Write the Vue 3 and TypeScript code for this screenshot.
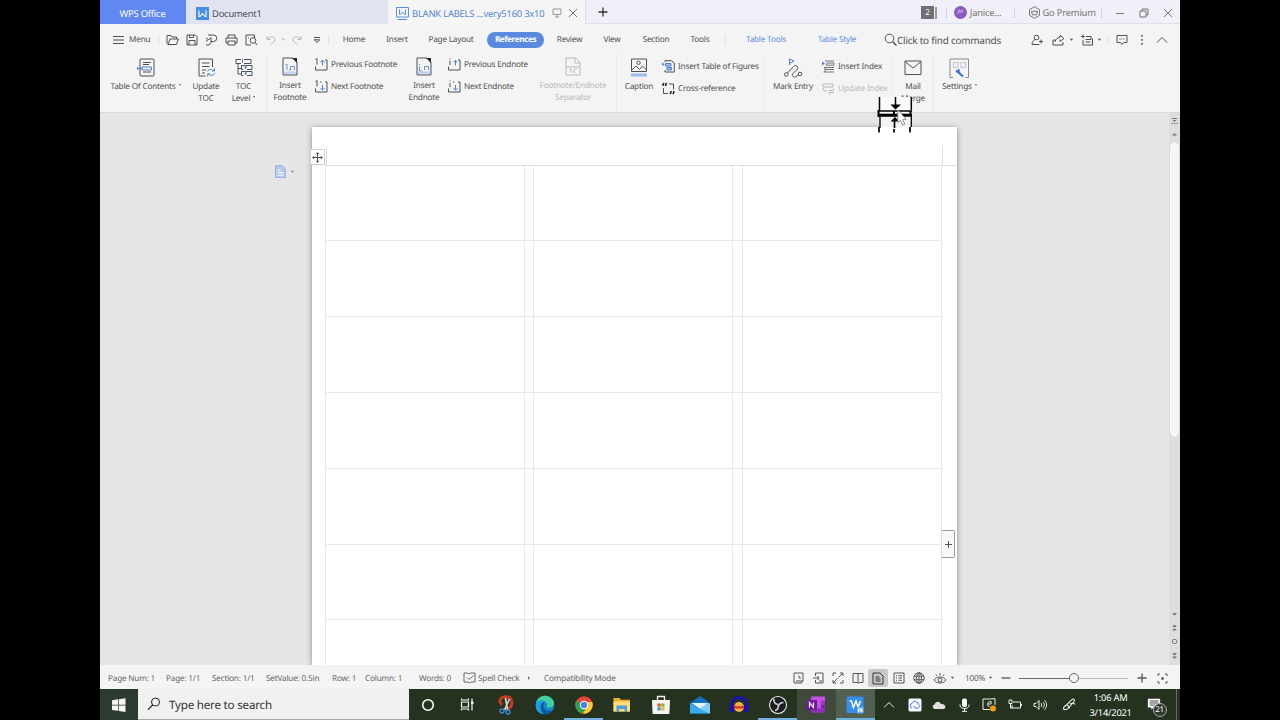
<script setup lang="ts">
import { ref } from 'vue';

interface Icon { w: number; h: number; body: string }
interface Cell { icon?: string; text?: string; w: number; ml?: number; cls?: string }

// line icons, stroke colour comes from currentColor
const icons: Record<string, Icon> = {
  burger: { w: 12, h: 10, body: '<path d="M0 1.500h11M0 5h11M0 8.500h11"/>' },
  open: { w: 13, h: 12, body: '<path d="M2 10.500L1 9.500V1.500h4l1 1.500h4.500v2M2 10.500L4 5h8.500L10.500 10.500z"/>' },
  save: { w: 12, h: 12, body: '<path d="M1 1h8.500l1.500 1.500V11H1zM3 11V6.500h6V11M3.500 1v2.500h4V1"/>' },
  export: { w: 13, h: 12, body: '<path d="M3 1h5.500a3 3 0 0 1 0 6.500H6M6 3.500v5L4 11H1M1 4l2.500 1.500L6 4M1 7.500l2.500-2"/>' },
  print: { w: 13, h: 12, body: '<path d="M3 4V1h7v3M3 9H1V4h11v5h-2M3 7h7v4H3z"/>' },
  preview: { w: 13, h: 12, body: '<path d="M6 11H1V1h8.500v3"/><circle cx="8" cy="6.500" r="2.800"/><path d="M10 8.500l2 2.500M3 4h1"/>' },
  undo: { w: 11, h: 10, body: '<path d="M1 1v3.500h3.500M1 4.500C3 1 9 1 9 4.500 9 7 6.500 8 5 9"/>' },
  redo: { w: 11, h: 10, body: '<path d="M10 1v3.500H6.500M10 4.500C8 1 2 1 2 4.500 2 7 4.500 8 6 9"/>' },
  dropdown: { w: 8, h: 8, body: '<path d="M1 1.500h6M1.200 3.800h5.600L4 6.500z"/>' },
  caret: { w: 5, h: 4, body: '<path d="M0.800 0.800h3.400L2.500 2.800z" fill="currentColor" stroke="none"/>' },
  search: { w: 13, h: 13, body: '<circle cx="5.500" cy="5.500" r="4.300"/><path d="M8.700 8.700L12.500 12.500" stroke-width="1.500"/>' },
  person: { w: 13, h: 12, body: '<circle cx="5.500" cy="3.500" r="2.300"/><path d="M4 5.500C2 6.500 1 8 1 10.500h7.500M10 5.500v4M8 7.500h4"/>' },
  share: { w: 13, h: 12, body: '<path d="M3 6H1v5h10V8M3 8C3.500 5 5.500 3.500 8 3.500V1.200L12 4.500 8 7.500V5.500"/>' },
  collab: { w: 13, h: 12, body: '<path d="M0 2.500h4M2 0.500v4M5 2.500h5v3H5M2 6v5h9.500V4.500M4.500 5.500h5M4.500 8h5"/>' },
  comment: { w: 12, h: 12, body: '<path d="M1 1.500h10v7H7.500L6 10.500 4.500 8.500H1z"/><path d="M3.500 5h5" stroke-dasharray="1 1"/>' },
  dots: { w: 4, h: 12, body: '<path d="M2 1v1.700M2 5v1.700M2 9v1.700" stroke-width="1.500"/>' },
  chevron: { w: 12, h: 8, body: '<path d="M1 6.500L6 1.500l5 5"/>' },
  monitor: { w: 10, h: 10, body: '<path d="M1 1h8v5.500H1zM5 6.500V9M3 9h4"/>' },
  close: { w: 10, h: 10, body: '<path d="M1 1l8 8M9 1L1 9"/>' },
  plus: { w: 10, h: 10, body: '<path d="M5 0.500v9M0.500 5h9" stroke-width="1.300"/>' },
  minus: { w: 10, h: 10, body: '<path d="M1 5.500h8"/>' },
  restore: { w: 10, h: 10, body: '<path d="M1 3h6v6H1zM3 3V1h6v6H7"/>' },
  premium: { w: 13, h: 13, body: '<path d="M6.500 0.700l5 2.900v5.800l-5 2.900-5-2.900V3.600z"/><path d="M4.300 8.800l-.8-3.700L5.300 6l1.200-1.700L7.700 6l1.800-.9-.8 3.700z"/>' },
  // ribbon
  toc: { w: 18, h: 20, body: '<rect x="3" y="1" width="14" height="17" rx="1"/><path d="M6 4.500h8M6 6.500h6M6 14h8"/><path d="M0 9l2.500 1.500L0 12z" fill="#3f78d0" stroke="none"/><path d="M1.500 10.500H5M5 9h9.500v3H5z" stroke="#4d80cf"/>' },
  updateToc: { w: 19, h: 20, body: '<path d="M8.500 18H2V1h13.500v8"/><path d="M5 5h7.500M5 8.500h7.500M5 12h4M5 15h3"/><path d="M10.500 13.500c1-2.500 5-2.800 6.500-.5M17.500 10.500V13H15M18 15c-1 2.800-5 3-6.700.8M10.700 18.500v-2.700H13" stroke="#4d80cf"/>' },
  tocLevel: { w: 18, h: 20, body: '<path d="M6 1.500H1v4h5M9 1.500h7v4H9M3 5.500V16h4M3 10.500h4M12 7.500H6.500v4H8M12 7.500h5v4h-5M12 13.500H6.500v4H8M12 13.500h5v4h-5"/><path d="M7.500 1v4M9.500 8h2L10 9.500h1.500l-2 1.500M9.500 14h2L10 15.500h1.500l-2 1.500" stroke="#4d80cf"/>' },
  footnote: { w: 16, h: 19, body: '<path d="M1 1h10l4 4v13H1z"/><path d="M10 1l5 5V1z" fill="#222" stroke="none"/><path d="M3.500 7.500H5V13M7 13H8.500V9.500h4V13" stroke="#6b92d8"/><path d="M2 14.500h12v2.500H2z" fill="#c3d3f2" stroke="none"/>' },
  endnote: { w: 16, h: 19, body: '<path d="M1 1h10l4 4v13H1z"/><path d="M10 1l5 5V1z" fill="#222" stroke="none"/><path d="M3.500 7v1M3.500 9.500V14h3M8.500 13V9.500h4V13" stroke="#6b92d8"/><path d="M2 14.500h12v2.500H2z" fill="#c3d3f2" stroke="none"/>' },
  noteSep: { w: 16, h: 19, body: '<path d="M1 1h10l4 4v13H1zM10 1v5h5M1 10h14M5 12h1v3.500M9 12v3.500h1M12 12h-2"/>' },
  prevFoot: { w: 13, h: 13, body: '<path d="M2 0.500v6M0.500 1.500l1.500-1M0.500 8.500V12h11.500V2H10" /><path d="M7.500 7.500V2.500M5.500 4.300l2-2 2 2" stroke="#4d80cf"/>' },
  nextFoot: { w: 13, h: 13, body: '<path d="M2 0.500v6M0.500 1.500l1.500-1M0.500 8.500V12h11.500V2H10M5 2h1.500" /><path d="M7.500 5v5M5.500 8.200l2 2 2-2" stroke="#4d80cf"/>' },
  prevEnd: { w: 13, h: 13, body: '<path d="M2 0.500v1M2 3v4M0.500 8.500V12h11.500V2H10" /><path d="M7.500 7.500V2.500M5.500 4.300l2-2 2 2" stroke="#4d80cf"/>' },
  nextEnd: { w: 13, h: 13, body: '<path d="M2 0.500v1M2 3v4M0.500 8.500V12h11.500V2H10M5 2h1.500" /><path d="M7.500 5v5M5.500 8.200l2 2 2-2" stroke="#4d80cf"/>' },
  caption: { w: 18, h: 20, body: '<path d="M1.500 1h15v12.500h-15zM2 12l4-4 3.500 3.500L12.500 8l4 4"/><circle cx="8.500" cy="4.800" r="1.700"/><path d="M1.500 16h15v2h-15z" fill="#b8cdf2" stroke="#8caee6"/>' },
  figures: { w: 13, h: 13, body: '<path d="M3 2V0.700h6.500L12.300 3v9H3v-2"/><path d="M0 2.500v3.500l2.500-1.700z" fill="#4d80cf" stroke="none"/><path d="M3.500 3.500H9v2.500H3.500zM5 7.500h4.500V10H5z" stroke="#4d80cf" fill="#a9c2ee"/>' },
  crossRef: { w: 13, h: 13, body: '<path d="M1 4V2.500L2 1M3.700 4V2.500l1-1.500" stroke="#222" stroke-width="1.500"/><path d="M7 2h4.500v5.500M1.500 6v5.500H6"/><path d="M9 9v1.500L8 12M11.800 9v1.500l-1 1.500" stroke="#222" stroke-width="1.500"/>' },
  markEntry: { w: 20, h: 20, body: '<path d="M6.500 7V1l4.500 2.200-4.500 2.300" stroke="#4d80cf"/><circle cx="3.300" cy="16.500" r="1.800"/><circle cx="17" cy="16" r="1.800"/><path d="M4.500 15L10.500 8.500c2-2.300 5.500.2 4 2.500L9.500 16c-1 2.300 1.500 4 3.500 2.500l2.500-1.500"/>' },
  insIndex: { w: 13, h: 13, body: '<path d="M0 1.500v4L3 3.500z" fill="#4d80cf" stroke="none"/><path d="M3 1h9M5 3h7v2.200H4zM2 7.500h10M3 9.500h9M1.500 12H12M3 7.500V12" stroke="#777"/>' },
  updIndex: { w: 13, h: 13, body: '<path d="M1 2h10v3H3a2 2 0 0 0 0 4h2M1 2v3M7 8.500h4.500M11.500 6.500v2M12 10.500H7.500M7.500 12.500v-2"/>' },
  mail: { w: 18, h: 16, body: '<path d="M1 1h16v13.500H1zM1 1.500l8 6.500 8-6.500"/>' },
  settings: { w: 21, h: 21, body: '<path d="M4 19.500H1V1h18.500v18.500h-3" stroke="#888"/><path d="M4.500 4.500H9v5H4.500zM12 4.500h4.500v5H12z" stroke="#b8c4dc"/><path d="M8 13l6 5.500" stroke="#3f78d0" stroke-width="2.200"/><path d="M6.500 12.500c0 2.500 3 3 4 1.500s0-3-1.500-3.500L8.800 12z" fill="#3f78d0" stroke="none"/>' },
  // status bar
  spell: { w: 13, h: 12, body: '<path d="M6 2L4.500 1H1v9h4l1.500 1L8 10h4V1H8zM4 5.500l2 2 4.500-4"/>' },
  history: { w: 11, h: 12, body: '<path d="M3 1h7v8H3M3 1H1v10h8V9M6 3.500V6h2"/>' },
  import: { w: 11, h: 12, body: '<path d="M2.500 4V1H10v10H2.500V8M0 6h6M4.500 4L6 6 4.500 8M6 9h3"/>' },
  expand: { w: 12, h: 12, body: '<path d="M1 4V1h3M8 1h3v3M11 8v3H8M4 11H1V8M6.500 5.500L11 1M5.500 6.500L1 11"/>' },
  book: { w: 12, h: 12, body: '<path d="M6 1.500H1v9h4l1 .8 1-.8h4v-9zM6 1.500V11"/>' },
  page: { w: 12, h: 13, body: '<path d="M1 1h7l3 3v8H1zM3.500 5h4M3.500 7h5M3.500 9h5" stroke="#333"/>' },
  outline: { w: 12, h: 12, body: '<path d="M1 1h10v10H1zM3 3.700h1M5.500 3.700H9M3 6h1M5.500 6H9M3 8.300h1M5.500 8.300H9"/>' },
  globe: { w: 12, h: 12, body: '<circle cx="6" cy="6" r="5.200"/><ellipse cx="6" cy="6" rx="2.400" ry="5.200"/><path d="M1 4.200h10M1 7.800h10M6 1v10"/>' },
  eye: { w: 14, h: 13, body: '<path d="M1 8c2.500-4 9.500-4 12 0-2.500 4-9.500 4-12 0z"/><circle cx="7" cy="8" r="2"/><path d="M7 1v2.500M3 2.500L4 4M11 2.500L10 4"/>' },
  focus: { w: 11, h: 11, body: '<path d="M1 3V1h2M8 1h2v2M10 8v2H8M3 10H1V8"/><circle cx="5.500" cy="5.500" r="1" fill="currentColor"/>' },
  // taskbar
  windows: { w: 14, h: 14, body: '<path d="M0 2.200l6-.9v5.400H0zM6.700 1.200L13.500 0.200v6.500H6.700zM0 7.400h6v5.400l-6-.9zM6.700 7.400h6.800v6.500l-6.800-1z" fill="#f5f5f5" stroke="none"/>' },
  find: { w: 14, h: 14, body: '<circle cx="8.500" cy="5" r="4" stroke="#222"/><path d="M5.700 8L1 12.700" stroke="#222" stroke-width="1.200"/>' },
  cortana: { w: 14, h: 14, body: '<circle cx="7" cy="7" r="5.300" stroke="#fff" stroke-width="1.600"/>' },
  taskView: { w: 14, h: 13, body: '<path d="M1.500 4h7v5h-7zM1.500 0.500V2h7V0.500M1.500 12.500V11h7v1.500M12 0.500v12" stroke="#f4f4f4" stroke-width="1.200"/><path d="M11 3.500h2.500v2.500H11z" fill="#f4f4f4" stroke="none"/>' },
  snip: { w: 18, h: 20, body: '<path d="M5 10C0 5 5 1.500 9 1.800c7.500.5 7.500 10 1.500 12" stroke="#c6381f" stroke-width="3"/><path d="M8.500 3l2 12M12.500 4l-5 11" stroke="#ccd0d5" stroke-width="1.800"/><circle cx="5" cy="16" r="2" stroke="#3c8fd0" stroke-width="1.300"/><circle cx="11" cy="17" r="2" stroke="#3c8fd0" stroke-width="1.300"/>' },
  edge: { w: 20, h: 20, body: '<circle cx="10" cy="10" r="9.300" fill="#1687c9" stroke="none"/><path d="M1 8C3-.5 14-1.500 18 5c3 5-1 8-5 7.500-2-.3-1-1.500-1-3C12 5 4 4 1 8z" fill="#43cfa0" stroke="none"/><path d="M1 8c4-3.500 9-2 8 1-2 3 1 7 5.500 7 2 0 3-.5 4-1.200C13 23-1 19 1 8z" fill="#0d56a0" stroke="none"/><path d="M1 8c3-3 7-3 9-1-4 0-5 4-4 8 .5 1.700 1.500 3 3 4C2 19 0 13 1 8z" fill="#1b9fe0" stroke="none"/>' },
  chrome: { w: 18, h: 18, body: '<circle cx="9" cy="9" r="8.700" fill="#e8443a" stroke="none"/><path d="M1.500 4.600A8.700 8.700 0 0 0 8 17.600L12 11 9 9z" fill="#2fa352" stroke="none"/><path d="M17.200 6A8.700 8.700 0 0 1 8 17.600L12.500 10 11 6z" fill="#fbc931" stroke="none"/><circle cx="9" cy="9" r="4.200" fill="#fff" stroke="none"/><circle cx="9" cy="9" r="3.200" fill="#4584e8" stroke="none"/>' },
  folder: { w: 18, h: 16, body: '<path d="M0.500 1h6l1.500 1.700h9V14.500H0.500z" fill="#e9ae35" stroke="none"/><path d="M0.500 4.500h16.500v10H0.500z" fill="#ffdc78" stroke="none"/><path d="M3.500 8.500h10.500v6.500h-2.500v-3H6v3H3.500z" fill="#4aa0dc" stroke="none"/>' },
  store: { w: 18, h: 20, body: '<path d="M5.500 5.500V1.500h7v4" stroke="#f5f5f5" stroke-width="1.300"/><path d="M0 5h18l-.6 14H0.600z" fill="#f5f5f5" stroke="none"/><path d="M5.500 8.500h3.200v3.200H5.500z" fill="#e8502b" stroke="none"/><path d="M9.300 8.500h3.200v3.200H9.300z" fill="#7db51c" stroke="none"/><path d="M5.500 12.300h3.200v3.200H5.500z" fill="#26a0e3" stroke="none"/><path d="M9.300 12.300h3.200v3.200H9.300z" fill="#f6b41a" stroke="none"/>' },
  mailApp: { w: 20, h: 18, body: '<path d="M0 7l10-7 10 7v10.500H0z" fill="#1371c4" stroke="none"/><path d="M1.500 7h17L10 13z" fill="#e8f4fc" stroke="none"/><path d="M0 7l10 6.500L20 7v10.500H0z" fill="#38abec" stroke="none"/><path d="M20 7v10.500L9 12.500z" fill="#7bd0fb" stroke="none"/>' },
  audacity: { w: 20, h: 18, body: '<path d="M3 12C0 -2 20 -2 17 12" stroke="#1511bb" stroke-width="2.500"/><path d="M1 9h4v7H1zM15 9h4v7h-4z" fill="#1511bb" stroke="none"/><ellipse cx="10" cy="11" rx="5" ry="5" fill="#f0b03c" stroke="none"/><path d="M5 10.500l1.700-1L8.500 11 10 9.500l1.500 1.500 1.800-1.500 1.700 1v2H5z" fill="#e02e20" stroke="none"/>' },
  obs: { w: 20, h: 20, body: '<circle cx="10" cy="10" r="8.500" fill="#1c1c20" stroke="#e8e8e8" stroke-width="1.100"/><path d="M6 4c-.5 3 1 5 4 5.500M15.500 7.500c-2.500 0-4.500 1.500-5 3.500M7 15.500c2.500-.5 3.800-2.500 3-5" stroke="#d8d8d8" stroke-width="1.600"/>' },
  onenote: { w: 20, h: 18, body: '<path d="M5 0.500h14v16H5z" fill="#c44fe0" stroke="none"/><path d="M15 4.500h4v4h-4z" fill="#9f34c6" stroke="none"/><path d="M15 8.500h4v4h-4z" fill="#7d24a8" stroke="none"/><path d="M5 12.500h14v4H5z" fill="#6b1b93" opacity=".6" stroke="none"/><path d="M0 4h11v10H0z" fill="#6f1a96" stroke="none"/><path d="M3.500 11.500v-5l4 5v-5" stroke="#fff" stroke-width="1.200"/>' },
  wps: { w: 18, h: 18, body: '<rect x="0.500" y="0.500" width="17" height="16.500" rx="1.500" fill="#358df0" stroke="none"/><path d="M3.500 5h2l2 6.500L10 5l2 6 2.500-6" stroke="#fff" stroke-width="1.500"/><path d="M11 11h6.500v6.500H11z" fill="#69adf7" stroke="none"/><path d="M12.500 16v-3h3.500v3M12.500 14.800h3.500" stroke="#fff"/>' },
  up: { w: 12, h: 8, body: '<path d="M1 6.500L6 1.500l5 5" stroke="#eee"/>' },
  cloudApp: { w: 14, h: 14, body: '<rect x="0.500" y="0.500" width="13" height="13" rx="1.500" fill="#f5f8ff" stroke="none"/><path d="M4 10a2.300 2.300 0 0 1 0-4.500C5 2.500 9.500 2.500 10 6c2.500.5 2 4 0 4H7L5.500 8" stroke="#3f7ee0"/>' },
  onedrive: { w: 14, h: 10, body: '<path d="M2.500 9a2.300 2.300 0 0 1 0-4.500C3.500 1 7.500 1 9 4c5-.5 5.500 4.500 2.500 5z" fill="#e2e0de" stroke="none"/>' },
  mic: { w: 11, h: 14, body: '<rect x="3" y="0.500" width="5" height="8.500" rx="2" fill="#fff" stroke="none"/><path d="M1 6.500v1c0 4 9 4 9 0v-1M5.500 10.500v3M3 13.300h5" stroke="#fff"/>' },
  capture: { w: 15, h: 14, body: '<path d="M9 1H1v10.500h7M13 7V0.500L9 1" stroke="#eee"/><path d="M8.500 3.500C5 3 4.500 8.500 7.500 8.500M6 6h3M9 3v3" stroke="#eee"/><circle cx="11" cy="10.500" r="3" fill="#f29a1d" stroke="none"/>' },
  battery: { w: 14, h: 11, body: '<path d="M5 3h7.500v6H4V6M1 1h3v3.500H1zM2.500 4.500V9h2M13.500 5v2" stroke="#eee"/>' },
  sound: { w: 14, h: 12, body: '<path d="M1 4.500h2L6 1.500v9L3 7.500H1zM8 4.200c1 1 1 2.600 0 3.600M9.800 2.800c2 2 2 4.400 0 6.400M11.500 1.200c2.800 2.800 2.800 6.800 0 9.600" stroke="#eee"/>' },
  pen: { w: 14, h: 13, body: '<path d="M2 9C6 6 8 2.500 10.500 1.200c1.500-.6 2.500.8 1.500 2.300L7 9.500C5 12 2 12.500 1.500 10.500S5 6 6 7.500 5.500 11 8 9.500M8 6c1.500-1.500 4.500-.5 5 .5" stroke="#eee" stroke-width="1.100"/>' },
  notice: { w: 16, h: 14, body: '<path d="M1 0.500h14v10H7.500L5 13v-2.500H1z" fill="#fff" stroke="none"/><path d="M3 3h10M3 5.300h10M3 7.600h6" stroke="#333"/>' },
};

const quickAccess: Cell[] = [
  { icon: 'open', w: 20 },
  { icon: 'save', w: 19 },
  { icon: 'export', w: 20 },
  { icon: 'print', w: 20 },
  { icon: 'preview', w: 20 },
  { icon: 'undo', w: 20, cls: 'off' },
  { icon: 'caret', w: 5, cls: 'off' },
  { icon: 'redo', w: 21, cls: 'off' },
  { icon: 'dropdown', w: 19 },
];

const menuTabs: Cell[] = [
  { text: 'Home', w: 50 },
  { text: 'Insert', w: 36 },
  { text: 'Page Layout', w: 72 },
  { text: 'References', w: 57 },
  { text: 'Review', w: 51 },
  { text: 'View', w: 34 },
  { text: 'Section', w: 54 },
  { text: 'Tools', w: 34 },
];
const activeTab = ref('References');

const menuRight: Cell[] = [
  { icon: 'person', w: 20 },
  { icon: 'share', w: 22 },
  { icon: 'caret', w: 4 },
  { icon: 'collab', w: 20, ml: 4 },
  { icon: 'caret', w: 4 },
];

const statusLeft: Cell[] = [
  { text: 'Page Num: 1', w: 58 },
  { text: 'Page: 1/1', w: 46 },
  { text: 'Section: 1/1', w: 54 },
  { text: 'SetValue: 0.5in', w: 66 },
  { text: 'Row: 1', w: 33 },
  { text: 'Column: 1', w: 54 },
  { text: 'Words: 0', w: 44 },
];

const viewModes: Cell[] = [
  { icon: 'history', w: 20 },
  { icon: 'import', w: 20 },
  { icon: 'expand', w: 20 },
  { icon: 'book', w: 20 },
  { icon: 'page', w: 20, cls: 'picked' },
  { icon: 'outline', w: 21 },
  { icon: 'globe', w: 20 },
  { icon: 'eye', w: 21 },
  { icon: 'caret', w: 5 },
];

const apps: Cell[] = [
  { icon: 'cortana', w: 38.8 },
  { icon: 'taskView', w: 38.8 },
  { icon: 'snip', w: 38.8 },
  { icon: 'edge', w: 38.8 },
  { icon: 'chrome', w: 38.8, cls: 'running' },
  { icon: 'folder', w: 38.8 },
  { icon: 'store', w: 38.8 },
  { icon: 'mailApp', w: 38.8 },
  { icon: 'audacity', w: 38.8 },
  { icon: 'obs', w: 38.8, cls: 'running' },
  { icon: 'onenote', w: 38.8, cls: 'lit' },
  { icon: 'wps', w: 38.8, cls: 'running focused' },
];

const tray: Cell[] = [
  { icon: 'up', w: 28 },
  { icon: 'cloudApp', w: 24 },
  { icon: 'onedrive', w: 25 },
  { icon: 'mic', w: 25 },
  { icon: 'capture', w: 26 },
  { icon: 'battery', w: 25 },
  { icon: 'sound', w: 25 },
  { icon: 'pen', w: 33 },
];

// label sheet: 3 columns of labels with narrow gutters between them
const sheetRows = 7;
const sheetCols = 5;
</script>

<template>
  <div class="screen">
    <div class="desktop">
      <div class="title-bar">
        <div class="wps-tab">WPS Office</div>
        <div class="doc-tab">
          <span class="w-badge"><svg width="13" height="13" viewBox="0 0 13 13" fill="none" stroke="#fff" stroke-width="1.1"><path d="M3 3.500v6h1l2.500-3 2.500 3h1v-6" /></svg></span>
          <span>Document1</span>
        </div>
        <div class="doc-tab current">
          <svg class="w-outline" width="13" height="13" viewBox="0 0 13 13" fill="none" stroke="#5a8fdc"><path d="M0.500 0.500h12v9.500H0.500zM2 12.500h9" /><path d="M3.500 2.500v5h1l2-2.500 2 2.500h1v-5" /></svg>
          <span class="doc-name">BLANK LABELS ...very5160 3x10</span>
          <svg class="ico pale" width="10" height="10" viewBox="0 0 10 10" v-html="icons.monitor.body" />
          <svg class="ico tab-close" width="10" height="10" viewBox="0 0 10 10" v-html="icons.close.body" />
        </div>
        <div class="add-tab"><svg class="ico" width="10" height="10" viewBox="0 0 10 10" v-html="icons.plus.body" /></div>
        <div class="account">
          <span class="count">2</span><span class="count-edge"></span>
          <i class="bar"></i>
          <span class="avatar">JM</span>
          <span class="user">Janice...</span>
          <i class="bar"></i>
          <svg class="ico premium-ico" width="13" height="13" viewBox="0 0 13 13" v-html="icons.premium.body" />
          <span class="premium">Go Premium</span>
          <i class="bar"></i>
          <span v-for="b in ['minus', 'restore', 'close']" :key="b" class="win-btn">
            <svg class="ico" width="10" height="10" viewBox="0 0 10 10" v-html="icons[b].body" />
          </span>
        </div>
      </div>

      <div class="menu-bar">
        <div class="menu-btn">
          <svg class="ico" width="12" height="10" viewBox="0 0 12 10" v-html="icons.burger.body" />
          <span>Menu</span>
        </div>
        <i class="bar"></i>
        <div class="quick">
          <span v-for="(c, i) in quickAccess" :key="i" class="cell" :class="c.cls" :style="{ width: c.w + 'px' }">
            <svg class="ico" :width="icons[c.icon!].w" :height="icons[c.icon!].h" :viewBox="`0 0 ${icons[c.icon!].w} ${icons[c.icon!].h}`" v-html="icons[c.icon!].body" />
          </span>
        </div>
        <i class="bar"></i>
        <span v-for="t in menuTabs" :key="t.text" class="cell tab" :class="{ active: t.text === activeTab }" :style="{ width: t.w + 'px' }" @click="activeTab = t.text!">{{ t.text }}</span>
        <i class="bar tools-bar"></i>
        <span class="cell context tools">Table Tools</span>
        <span class="cell context look">Table Style</span>
        <div class="find">
          <svg class="ico" width="13" height="13" viewBox="0 0 13 13" v-html="icons.search.body" />
          <span>Click to find commands</span>
        </div>
        <div class="menu-right">
          <span v-for="(c, i) in menuRight" :key="i" class="cell" :style="{ width: c.w + 'px', marginLeft: (c.ml || 0) + 'px' }">
            <svg class="ico" :width="icons[c.icon!].w" :height="icons[c.icon!].h" :viewBox="`0 0 ${icons[c.icon!].w} ${icons[c.icon!].h}`" v-html="icons[c.icon!].body" />
          </span>
          <i class="bar"></i>
          <span v-for="n in ['comment', 'dots', 'chevron']" :key="n" class="cell end">
            <svg class="ico" :width="icons[n].w" :height="icons[n].h" :viewBox="`0 0 ${icons[n].w} ${icons[n].h}`" v-html="icons[n].body" />
          </span>
        </div>
      </div>

      <div class="ribbon">
        <div class="big w-toc">
          <svg class="ico" width="18" height="20" viewBox="0 0 18 20" v-html="icons.toc.body" />
          <span>Table Of Contents<i class="tri"></i></span>
        </div>
        <div class="big w-update">
          <svg class="ico" width="19" height="20" viewBox="0 0 19 20" v-html="icons.updateToc.body" />
          <span>Update</span><span>TOC</span>
        </div>
        <div class="big w-level">
          <svg class="ico" width="18" height="20" viewBox="0 0 18 20" v-html="icons.tocLevel.body" />
          <span>TOC</span><span>Level<i class="tri"></i></span>
        </div>
        <i class="rule"></i>
        <div class="big raised w-foot">
          <svg class="ico" width="16" height="19" viewBox="0 0 16 19" v-html="icons.footnote.body" />
          <span>Insert</span><span>Footnote</span>
        </div>
        <div class="pair w-pair">
          <div><svg class="ico" width="13" height="13" viewBox="0 0 13 13" v-html="icons.prevFoot.body" /><span>Previous Footnote</span></div>
          <div><svg class="ico" width="13" height="13" viewBox="0 0 13 13" v-html="icons.nextFoot.body" /><span>Next Footnote</span></div>
        </div>
        <div class="big raised w-end">
          <svg class="ico" width="16" height="19" viewBox="0 0 16 19" v-html="icons.endnote.body" />
          <span>Insert</span><span>Endnote</span>
        </div>
        <div class="pair w-pair2">
          <div><svg class="ico" width="13" height="13" viewBox="0 0 13 13" v-html="icons.prevEnd.body" /><span>Previous Endnote</span></div>
          <div><svg class="ico" width="13" height="13" viewBox="0 0 13 13" v-html="icons.nextEnd.body" /><span>Next Endnote</span></div>
        </div>
        <div class="big raised off w-sep">
          <svg class="ico" width="16" height="19" viewBox="0 0 16 19" v-html="icons.noteSep.body" />
          <span>Footnote/Endnote</span><span>Separator</span>
        </div>
        <i class="rule sep-rule"></i>
        <div class="big w-caption">
          <svg class="ico" width="18" height="20" viewBox="0 0 18 20" v-html="icons.caption.body" />
          <span>Caption</span>
        </div>
        <div class="pair low w-fig">
          <div><svg class="ico" width="13" height="13" viewBox="0 0 13 13" v-html="icons.figures.body" /><span>Insert Table of Figures</span></div>
          <div><svg class="ico" width="13" height="13" viewBox="0 0 13 13" v-html="icons.crossRef.body" /><span>Cross-reference</span></div>
        </div>
        <i class="rule"></i>
        <div class="big w-mark">
          <svg class="ico" width="20" height="20" viewBox="0 0 20 20" v-html="icons.markEntry.body" />
          <span>Mark Entry</span>
        </div>
        <div class="pair low w-index">
          <div><svg class="ico" width="13" height="13" viewBox="0 0 13 13" v-html="icons.insIndex.body" /><span>Insert Index</span></div>
          <div class="off"><svg class="ico" width="13" height="13" viewBox="0 0 13 13" v-html="icons.updIndex.body" /><span>Update Index</span></div>
        </div>
        <i class="rule"></i>
        <div class="big w-mail">
          <svg class="ico" width="18" height="20" viewBox="0 -2 18 20" v-html="icons.mail.body" />
          <span>Mail</span><span>Merge</span>
        </div>
        <i class="rule"></i>
        <div class="big w-set">
          <svg class="ico" width="21" height="20" viewBox="0 0 21 20" v-html="icons.settings.body" />
          <span>Settings<i class="tri"></i></span>
        </div>
      </div>

      <div class="workspace">
        <div class="page">
          <div class="header-marks"></div>
          <div class="sheet">
            <template v-for="r in sheetRows" :key="r">
              <div v-for="c in sheetCols" :key="c" class="label"></div>
            </template>
          </div>
          <div class="move-handle">
            <svg width="11" height="11" viewBox="0 0 11 11" fill="none" stroke="#555"><path d="M5.500 1v9M1 5.500h9M4 2.200l1.500-1.500L7 2.200M4 8.800l1.500 1.500L7 8.800M2.200 4L.7 5.500 2.200 7M8.800 4l1.500 1.500L8.800 7" /></svg>
          </div>
          <div class="add-col"><svg width="7" height="7" viewBox="0 0 7 7" stroke="#555"><path d="M3.500 0v7M0 3.500h7" /></svg></div>
        </div>
        <div class="para-tool">
          <svg width="11" height="13" viewBox="0 0 11 13" fill="none"><path d="M0.500 0.500h6.500l3.500 3.500v8.500H0.500z" fill="#b5c8ea" stroke="#9db5e0" /><path d="M2.500 5h3M2.500 7.500h6M2.500 10h6" stroke="#fff" /></svg>
          <svg class="ico" width="5" height="4" viewBox="0 0 5 4" v-html="icons.caret.body" />
        </div>
        <div class="scroll">
          <svg class="scroll-top" width="11" height="28" viewBox="0 0 11 28" fill="#777"><path d="M3 5h5v1H3zM3.500 7h4l-2 2zM2.500 10h1.500v1H2.500zM5 10h1.500v1H5zM7.500 10H9v1H7.500zM3 22.500h5L5.500 20z" /></svg>
          <div class="thumb"></div>
          <svg class="scroll-end" width="11" height="56" viewBox="0 0 11 56" fill="#777"><path d="M3 4h5L5.500 6.500zM3 18h5L5.500 15.500zM3 21.500h5L5.500 19zM3 44h5l-2.500 2.500zM3 47.500h5L5.500 50z" /><rect x="3.500" y="30.500" width="4" height="4" rx="1" fill="none" stroke="#777" /></svg>
        </div>
      </div>

      <div class="status-bar">
        <span v-for="s in statusLeft" :key="s.text" class="status-text" :style="{ width: s.w + 'px' }">{{ s.text }}</span>
        <svg class="ico" width="13" height="12" viewBox="0 0 13 12" v-html="icons.spell.body" />
        <span class="spell">Spell Check</span>
        <i class="side-tri"></i>
        <span class="compat">Compatibility Mode</span>
        <div class="views">
          <span v-for="(c, i) in viewModes" :key="i" class="cell" :class="c.cls" :style="{ width: c.w + 'px' }">
            <svg class="ico" :width="icons[c.icon!].w" :height="icons[c.icon!].h" :viewBox="`0 0 ${icons[c.icon!].w} ${icons[c.icon!].h}`" v-html="icons[c.icon!].body" />
          </span>
          <span class="zoom">100%</span>
          <svg class="ico" width="5" height="4" viewBox="0 0 5 4" v-html="icons.caret.body" />
          <svg class="ico zoom-out" width="10" height="10" viewBox="0 0 10 10"><path d="M0.500 5h9" stroke-width="1.300" /></svg>
          <div class="track"><i class="knob"></i></div>
          <svg class="ico" width="10" height="10" viewBox="0 0 10 10" v-html="icons.plus.body" />
          <svg class="ico focus" width="11" height="11" viewBox="0 0 11 11" v-html="icons.focus.body" />
        </div>
      </div>

      <div class="taskbar">
        <div class="start"><svg width="14" height="14" viewBox="0 0 14 14" v-html="icons.windows.body" /></div>
        <div class="task-search">
          <svg class="ico" width="14" height="14" viewBox="0 0 14 14" v-html="icons.find.body" />
          <span>Type here to search</span>
        </div>
        <span v-for="a in apps" :key="a.icon" class="app" :class="a.cls" :style="{ width: a.w + 'px' }">
          <svg class="ico" :width="icons[a.icon!].w" :height="icons[a.icon!].h" :viewBox="`0 0 ${icons[a.icon!].w} ${icons[a.icon!].h}`" v-html="icons[a.icon!].body" />
        </span>
        <span v-for="a in tray" :key="a.icon" class="app" :style="{ width: a.w + 'px' }">
          <svg class="ico" :width="icons[a.icon!].w" :height="icons[a.icon!].h" :viewBox="`0 0 ${icons[a.icon!].w} ${icons[a.icon!].h}`" v-html="icons[a.icon!].body" />
        </span>
        <div class="clock"><span>1:06 AM</span><span>3/14/2021</span></div>
        <div class="notice">
          <svg class="ico" width="14" height="13" viewBox="0 0 16 14" v-html="icons.notice.body" />
          <span class="notice-count">21</span>
        </div>
        <i class="show-desktop"></i>
      </div>

      <!-- row resize pointer over the ribbon edge -->
      <svg class="pointer" width="38" height="38" viewBox="0 0 38 38" fill="none" stroke="#000">
        <path d="M4 0h32v16H4z" fill="#fbfbfb" stroke="none" />
        <path d="M4 20h31v10H4z" fill="#f4f4f4" stroke="none" />
        <path d="M3.500 0v13M19.500 0v8M35.300 0v13" stroke-width="1.500" />
        <path d="M2 14h34" stroke-width="1.500" />
        <path d="M2.500 13v7M34.500 14v4M18 14v4" stroke-width="2" />
        <path d="M2 18.300h34" stroke-width="3" />
        <path d="M4 20v11M35.300 19v11" stroke-width="1.300" />
        <path d="M18.500 24v7M3 30v5.500M18 32v3.500M34 30v5.500" stroke-width="1.700" />
        <path d="M14.500 7.500h10.500l-5.500 5zM14.500 24.500h9l-4.500-4.500z" fill="#000" stroke="none" />
        <path d="M21.800 13v12.500l2.700-2 2.300 4.500 2-1-2.200-4.300 3.600-.5z" fill="#fff" stroke="#777" stroke-width=".8" />
      </svg>
    </div>
  </div>
</template>

<style>
body {
  margin: 0;
  background: #000;
}
</style>

<style scoped>
.screen {
  width: 1280px;
  height: 720px;
  display: flex;
  justify-content: center;
  overflow: hidden;
  background: #000;
  font-family: "Noto Sans", "Open Sans", sans-serif;
  font-size: 8.2px;
  letter-spacing: -0.2px;
  color: #505050;
  white-space: nowrap;
  text-rendering: geometricPrecision;
}

.desktop {
  position: relative;
  width: 1080px;
  height: 720px;
  display: flex;
  flex-direction: column;
  background: #f4f4f4;
}

.ico {
  display: block;
  flex: none;
  fill: none;
  stroke: currentColor;
}

.cell {
  display: flex;
  flex: none;
  align-items: center;
  justify-content: center;
}

.bar {
  flex: none;
  width: 1px;
  height: 10px;
  background: #d2d4da;
}

.off {
  color: #b9b9b9;
}

/* title bar */
.title-bar {
  display: flex;
  flex: none;
  height: 24px;
  background: #eff0f8;
  box-shadow: inset 0 -1px #dfe1ea;
}

.wps-tab {
  width: 85px;
  padding-right: 1px;
  line-height: 27px;
  text-align: center;
  font-size: 9.4px;
  color: #fff;
  background: #6188f1;
}

.doc-tab {
  box-sizing: border-box;
  display: flex;
  align-items: center;
  width: 202px;
  padding: 2px 0 0 10px;
  font-size: 9.4px;
  color: #4b4d55;
  background: #e1e4f0;
}

.doc-tab.current {
  width: 198px;
  padding-left: 8px;
  color: #5585d0;
  background: #f5f5f5;
  border-right: 1px solid #dcdee6;
}

.w-badge {
  width: 13px;
  height: 13px;
  margin-right: 3px;
  background: #458ee4;
}

.w-badge svg {
  display: block;
}

.doc-name {
  width: 140px;
  margin-left: 3px;
}

.pale {
  color: #999;
}

.tab-close {
  margin-left: 6px;
  color: #777;
}

.add-tab {
  display: flex;
  align-items: center;
  margin-left: 12px;
  color: #333;
}

.account {
  display: flex;
  align-items: center;
  width: 259px;
  margin-left: auto;
  padding-top: 1px;
  font-size: 9.4px;
  color: #777;
}

.count {
  width: 13px;
  height: 13px;
  line-height: 13px;
  text-align: center;
  font-size: 8px;
  color: #fff;
  background: #707074;
}

.count-edge {
  width: 2px;
  height: 12px;
  margin: 0 9px 0 1px;
  background: #999;
}

.avatar {
  width: 13px;
  height: 13px;
  margin: 0 3px 0 7px;
  line-height: 13px;
  text-align: center;
  font-size: 5px;
  letter-spacing: 0;
  color: #e2d4f3;
  background: #8a5cbd;
  border-radius: 50%;
}

.user {
  width: 45px;
}

.premium-ico {
  margin: 0 1px 0 13px;
}

.premium {
  width: 59px;
}

.win-btn {
  display: flex;
  flex: none;
  justify-content: center;
  width: 24px;
}

.win-btn:nth-last-child(3) {
  margin-left: 6px;
}

/* menu bar */
.menu-bar {
  display: flex;
  flex: none;
  align-items: center;
  box-sizing: border-box;
  height: 30px;
  padding-top: 1px;
}

.menu-btn {
  box-sizing: border-box;
  display: flex;
  align-items: center;
  gap: 4px;
  width: 58px;
  padding-left: 13px;
}

.menu-bar .bar {
  background: #e4e4e4;
}

.quick {
  display: flex;
  align-items: center;
  width: 166px;
  padding-left: 3px;
}

.tab {
  height: 16px;
}

.tab.active {
  font-weight: 700;
  letter-spacing: -0.4px;
  color: #fff;
  background: #5a8adf;
  border-radius: 8px;
}

.tools-bar {
  margin-left: 8px;
}

.context {
  color: #5b90e0;
}

.tools {
  width: 80px;
}

.look {
  width: 62px;
}

.find {
  display: flex;
  align-items: center;
  margin-left: 16px;
  font-size: 9.9px;
}

.menu-right {
  display: flex;
  align-items: center;
  width: 153px;
  margin-left: auto;
}

.menu-right .bar {
  margin: 0 3px 0 7px;
}

.end {
  width: 20px;
}

/* ribbon */
.ribbon {
  display: flex;
  flex: none;
  box-sizing: border-box;
  height: 59px;
  border-bottom: 1px solid #d9d9d9;
}

.rule {
  width: 1px;
  background: #e9e9e9;
}

.sep-rule {
  margin-left: 3px;
}

.big {
  display: flex;
  flex: none;
  flex-direction: column;
  align-items: center;
  padding-top: 4px;
}

.big .ico {
  margin-bottom: 3px;
}

.big span {
  line-height: 12px;
}

.big.raised {
  padding-top: 3px;
}

.big.raised .ico {
  margin-bottom: 4px;
}

.w-toc { width: 91px; }
.w-update { width: 30px; }
.w-level { width: 45px; }
.w-foot { width: 46px; }
.w-end { width: 44px; }
.w-sep { width: 80px; }
.w-caption { width: 44px; }
.w-mark { width: 56px; }
.w-mail { width: 40px; }
.w-set { width: 51px; }

.tri {
  display: inline-block;
  margin: 0 0 3px 3px;
  border: 1.8px solid transparent;
  border-top: 2px solid #666;
  border-bottom: 0;
}

.pair {
  display: flex;
  flex: none;
  flex-direction: column;
  gap: 9px;
  padding-top: 4px;
}

.pair.low {
  padding-top: 6px;
}

.pair div {
  display: flex;
  align-items: center;
  gap: 3px;
  height: 13px;
}

.w-pair { width: 87px; padding-left: 2px; }
.w-pair2 { width: 85px; padding-left: 2px; }
.w-fig { width: 102px; padding-left: 1px; }
.w-index { width: 70px; padding-left: 1px; }

/* document */
.workspace {
  position: relative;
  display: flex;
  flex: 1;
  justify-content: flex-end;
  min-height: 0;
  background: #e6e6e6;
}

.page {
  position: absolute;
  top: 14px;
  left: 212px;
  bottom: 0;
  box-sizing: border-box;
  width: 645px;
  padding: 20px 0 0 13px;
  background: #fff;
  box-shadow: 0 1px 6px rgba(0, 0, 0, .4);
  clip-path: inset(-6px -8px 0 -6px);
}

.header-marks {
  width: 615px;
  height: 18px;
  margin-left: 1px;
  border-left: 1px solid #dcdcdc;
  border-right: 1px solid #dcdcdc;
}

.sheet {
  display: grid;
  grid-template-columns: 199px 9px 199px 10px 200px;
  grid-template-rows: 75px 76px 76px 76px 76px 75px 46px;
  width: 632px;
  border-top: 1px solid #e0e0e0;
}

.label {
  border-left: 1px solid #e9e9e9;
  border-bottom: 1px solid #e9e9e9;
}

.label:nth-child(5n) {
  border-right: 1px solid #e9e9e9;
}

.label:nth-last-child(-n + 5) {
  border-bottom: 0;
}

.move-handle {
  position: absolute;
  top: 22px;
  left: -2px;
  box-sizing: border-box;
  display: flex;
  align-items: center;
  justify-content: center;
  width: 15px;
  height: 16px;
  background: #fff;
  border: 1px solid #d0d0d0;
  border-radius: 1px;
}

.add-col {
  position: absolute;
  top: 403px;
  left: 629px;
  box-sizing: border-box;
  display: flex;
  align-items: center;
  justify-content: center;
  width: 14px;
  height: 28px;
  background: #f8f8f8;
  border: 1px solid #999;
  border-left-color: #ddd;
  border-radius: 0 2px 2px 0;
}

.para-tool {
  position: absolute;
  top: 52px;
  left: 175px;
  display: flex;
  align-items: center;
  gap: 4px;
  color: #888;
}

.scroll {
  display: flex;
  flex-direction: column;
  width: 11px;
  background: #dedede;
}

.thumb {
  height: 295px;
  margin: 1px;
  background: #f5f5f5;
  border-radius: 5px;
  box-shadow: 0 0 1px #aaa;
}

.scroll-end {
  margin-top: auto;
}

/* status bar */
.status-bar {
  display: flex;
  flex: none;
  align-items: center;
  box-sizing: border-box;
  height: 24px;
  padding: 2px 0 0 8px;
  color: #666;
  background: #f4f4f4;
}

.spell {
  width: 50px;
  margin-left: 2px;
}

.side-tri {
  border: 2px solid transparent;
  border-left-color: #777;
  border-right: 0;
}

.compat {
  margin-left: 14px;
}

.views {
  display: flex;
  align-items: center;
  width: 392px;
  margin-left: auto;
  color: #555;
}

.picked {
  height: 18px;
  background: #c8c8c8;
  border-radius: 2px;
}

.zoom {
  width: 23px;
  margin-left: 10px;
}

.zoom-out {
  margin: 0 8px;
}

.track {
  display: flex;
  align-items: center;
  justify-content: center;
  width: 109px;
  height: 1px;
  margin-right: 9px;
  background: linear-gradient(90deg, #666 50%, #bbb 50%);
}

.knob {
  width: 8px;
  height: 8px;
  background: #f4f4f4;
  border: 1px solid #666;
  border-radius: 50%;
}

.focus {
  margin-left: 10px;
}

/* taskbar */
.taskbar {
  display: flex;
  flex: none;
  height: 31px;
  color: #fff;
  background: #25321f;
}

.start {
  display: flex;
  align-items: center;
  justify-content: center;
  width: 38px;
  background: #2c3a2f;
}

.task-search {
  display: flex;
  align-items: center;
  box-sizing: border-box;
  gap: 8px;
  width: 271px;
  padding-left: 9px;
  font-size: 11.6px;
  color: #333;
  background: #f1f1f1;
  border-bottom: 1px solid #aaa;
}

.task-search span {
  padding-top: 2px;
}

.app {
  display: flex;
  flex: none;
  align-items: center;
  justify-content: center;
  box-sizing: border-box;
}

.running {
  box-shadow: inset 0 -2px #6fb0de;
}

.lit {
  background: #3f4a3b;
}

.focused {
  background: #52604f;
}

.clock {
  display: flex;
  flex-direction: column;
  justify-content: center;
  width: 50px;
  line-height: 15px;
  text-align: center;
  font-size: 9.3px;
}

.notice {
  position: relative;
  display: flex;
  align-items: center;
  margin-left: 11px;
}

.notice-count {
  position: absolute;
  top: 14px;
  left: 6px;
  width: 12px;
  height: 12px;
  line-height: 12px;
  text-align: center;
  font-size: 8px;
  background: #333a30;
  border: 1px solid #aaa;
  border-radius: 50%;
}

.show-desktop {
  width: 1px;
  margin-left: auto;
  margin-right: 3px;
  background: #666e62;
}

.pointer {
  position: absolute;
  top: 97px;
  left: 776px;
}
</style>
